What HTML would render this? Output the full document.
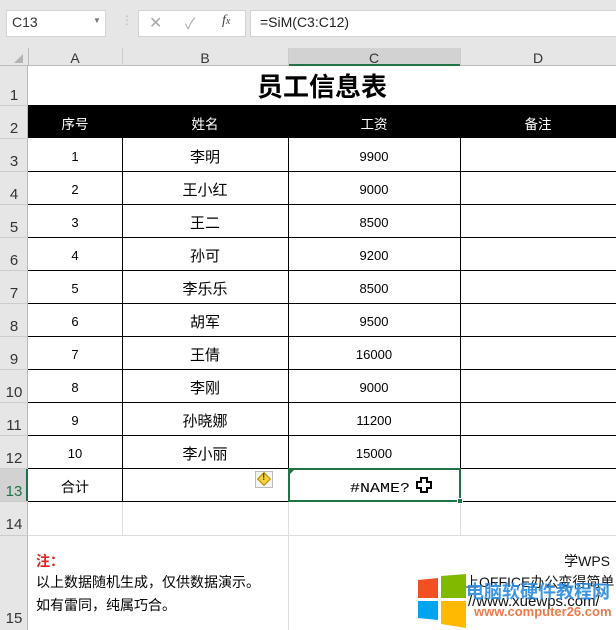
<!DOCTYPE html>
<html><head><meta charset="utf-8"><style>
*{margin:0;padding:0;box-sizing:border-box}
body{width:616px;height:630px;overflow:hidden;background:#e6e6e6;font-family:"Liberation Sans","Noto Sans CJK SC",sans-serif;position:relative}
.a{position:absolute}
.hl{position:absolute;background:#000;height:1px}
.vl{position:absolute;background:#000;width:1px}
.c{position:absolute;text-align:center;font-size:14px;color:#000}
.n{font-size:13px;margin-top:2px}
.rn{position:absolute;left:0;width:28px;text-align:center;font-size:15px;color:#333}
</style></head><body>
<div class="a" style="left:6px;top:10px;width:100px;height:27px;background:#fff;border:1px solid #d4d4d4"></div>
<div class="a" style="left:12px;top:14px;font-size:14px;color:#333">C13</div>
<div class="a" style="left:93px;top:16px;font-size:8px;color:#777">▼</div>
<div class="a" style="left:121px;top:13px;font-size:12px;color:#bbb">⋮</div>
<div class="a" style="left:138px;top:10px;width:108px;height:27px;background:#fff;border:1px solid #d4d4d4"></div>
<div class="a" style="left:149px;top:13px;font-size:16px;color:#aaa">✕</div>
<div class="a" style="left:185px;top:13px;font-size:15px;color:#aaa">✓</div>
<div class="a" style="left:222px;top:13px;font-size:14px;color:#444;font-style:italic;font-family:'Liberation Serif',serif">f<span style="font-size:10px">x</span></div>
<div class="a" style="left:250px;top:10px;width:370px;height:27px;background:#fff;border:1px solid #d4d4d4"></div>
<div class="a" style="left:260px;top:14px;font-size:14px;color:#222">=SiM(C3:C12)</div>
<div class="a" style="left:0;top:48px;width:616px;height:18px;background:#e6e6e6;border-bottom:1px solid #bbb"></div>
<div class="a" style="left:288px;top:48px;width:172px;height:18px;background:#d2d2d2;border-bottom:2px solid #217346"></div>
<div class="a" style="left:14px;top:54px;width:0;height:0;border-left:9px solid transparent;border-bottom:9px solid #b4b4b4"></div>
<div class="vl" style="left:28px;top:48px;height:18px;background:#bbb"></div>
<div class="vl" style="left:122px;top:48px;height:18px;background:#ccc"></div>
<div class="vl" style="left:288px;top:48px;height:18px;background:#ccc"></div>
<div class="vl" style="left:460px;top:48px;height:18px;background:#ccc"></div>
<div class="c" style="left:28px;top:50px;width:94px;color:#333">A</div>
<div class="c" style="left:122px;top:50px;width:166px;color:#333">B</div>
<div class="c" style="left:288px;top:50px;width:172px;color:#333">C</div>
<div class="c" style="left:460px;top:50px;width:156px;color:#333">D</div>
<div class="a" style="left:28px;top:66px;width:588px;height:564px;background:#fff"></div>
<div class="a" style="left:0;top:66px;width:28px;height:564px;background:#e6e6e6;border-right:1px solid #bbb"></div>
<div class="a" style="left:0;top:468px;width:28px;height:33px;background:#d2d2d2;border-right:2px solid #217346"></div>
<div class="a" style="left:0;top:105px;width:28px;height:1px;background:#ccc"></div>
<div class="a" style="left:0;top:138px;width:28px;height:1px;background:#ccc"></div>
<div class="a" style="left:0;top:171px;width:28px;height:1px;background:#ccc"></div>
<div class="a" style="left:0;top:204px;width:28px;height:1px;background:#ccc"></div>
<div class="a" style="left:0;top:237px;width:28px;height:1px;background:#ccc"></div>
<div class="a" style="left:0;top:270px;width:28px;height:1px;background:#ccc"></div>
<div class="a" style="left:0;top:303px;width:28px;height:1px;background:#ccc"></div>
<div class="a" style="left:0;top:336px;width:28px;height:1px;background:#ccc"></div>
<div class="a" style="left:0;top:369px;width:28px;height:1px;background:#ccc"></div>
<div class="a" style="left:0;top:402px;width:28px;height:1px;background:#ccc"></div>
<div class="a" style="left:0;top:435px;width:28px;height:1px;background:#ccc"></div>
<div class="a" style="left:0;top:468px;width:28px;height:1px;background:#ccc"></div>
<div class="a" style="left:0;top:501px;width:28px;height:1px;background:#ccc"></div>
<div class="a" style="left:0;top:535px;width:28px;height:1px;background:#ccc"></div>
<div class="rn" style="top:87px">1</div>
<div class="rn" style="top:120px">2</div>
<div class="rn" style="top:153px">3</div>
<div class="rn" style="top:186px">4</div>
<div class="rn" style="top:219px">5</div>
<div class="rn" style="top:252px">6</div>
<div class="rn" style="top:285px">7</div>
<div class="rn" style="top:318px">8</div>
<div class="rn" style="top:351px">9</div>
<div class="rn" style="top:384px">10</div>
<div class="rn" style="top:417px">11</div>
<div class="rn" style="top:450px">12</div>
<div class="rn" style="top:483px;color:#217346">13</div>
<div class="rn" style="top:516px">14</div>
<div class="rn" style="top:610px">15</div>
<div class="c" style="left:28px;top:70px;width:588px;font-size:26px;font-weight:bold;line-height:34px">员工信息表</div>
<div class="a" style="left:28px;top:105px;width:588px;height:33px;background:#000"></div>
<div class="c" style="left:28px;top:113px;width:94px;color:#fff;font-size:13.5px">序号</div>
<div class="c" style="left:122px;top:113px;width:166px;color:#fff;font-size:13.5px">姓名</div>
<div class="c" style="left:288px;top:113px;width:172px;color:#fff;font-size:13.5px">工资</div>
<div class="c" style="left:460px;top:113px;width:156px;color:#fff;font-size:13.5px">备注</div>
<div class="vl" style="left:122px;top:138px;height:363px"></div>
<div class="vl" style="left:288px;top:138px;height:363px"></div>
<div class="vl" style="left:460px;top:138px;height:363px"></div>
<div class="hl" style="left:28px;top:171px;width:588px"></div>
<div class="hl" style="left:28px;top:204px;width:588px"></div>
<div class="hl" style="left:28px;top:237px;width:588px"></div>
<div class="hl" style="left:28px;top:270px;width:588px"></div>
<div class="hl" style="left:28px;top:303px;width:588px"></div>
<div class="hl" style="left:28px;top:336px;width:588px"></div>
<div class="hl" style="left:28px;top:369px;width:588px"></div>
<div class="hl" style="left:28px;top:402px;width:588px"></div>
<div class="hl" style="left:28px;top:435px;width:588px"></div>
<div class="hl" style="left:28px;top:468px;width:588px"></div>
<div class="hl" style="left:28px;top:501px;width:588px"></div>
<div class="a" style="left:122px;top:502px;width:1px;height:33px;background:#ddd"></div>
<div class="a" style="left:288px;top:502px;width:1px;height:128px;background:#ddd"></div>
<div class="a" style="left:460px;top:502px;width:1px;height:33px;background:#ddd"></div>
<div class="a" style="left:28px;top:535px;width:588px;height:1px;background:#ddd"></div>
<div class="c n" style="left:28px;top:147px;width:94px">1</div><div class="c" style="left:122px;top:146px;width:166px;font-size:15px">李明</div><div class="c n" style="left:288px;top:147px;width:172px">9900</div>
<div class="c n" style="left:28px;top:180px;width:94px">2</div><div class="c" style="left:122px;top:179px;width:166px;font-size:15px">王小红</div><div class="c n" style="left:288px;top:180px;width:172px">9000</div>
<div class="c n" style="left:28px;top:213px;width:94px">3</div><div class="c" style="left:122px;top:212px;width:166px;font-size:15px">王二</div><div class="c n" style="left:288px;top:213px;width:172px">8500</div>
<div class="c n" style="left:28px;top:246px;width:94px">4</div><div class="c" style="left:122px;top:245px;width:166px;font-size:15px">孙可</div><div class="c n" style="left:288px;top:246px;width:172px">9200</div>
<div class="c n" style="left:28px;top:279px;width:94px">5</div><div class="c" style="left:122px;top:278px;width:166px;font-size:15px">李乐乐</div><div class="c n" style="left:288px;top:279px;width:172px">8500</div>
<div class="c n" style="left:28px;top:312px;width:94px">6</div><div class="c" style="left:122px;top:311px;width:166px;font-size:15px">胡军</div><div class="c n" style="left:288px;top:312px;width:172px">9500</div>
<div class="c n" style="left:28px;top:345px;width:94px">7</div><div class="c" style="left:122px;top:344px;width:166px;font-size:15px">王倩</div><div class="c n" style="left:288px;top:345px;width:172px">16000</div>
<div class="c n" style="left:28px;top:378px;width:94px">8</div><div class="c" style="left:122px;top:377px;width:166px;font-size:15px">李刚</div><div class="c n" style="left:288px;top:378px;width:172px">9000</div>
<div class="c n" style="left:28px;top:411px;width:94px">9</div><div class="c" style="left:122px;top:410px;width:166px;font-size:15px">孙晓娜</div><div class="c n" style="left:288px;top:411px;width:172px">11200</div>
<div class="c n" style="left:28px;top:444px;width:94px">10</div><div class="c" style="left:122px;top:443px;width:166px;font-size:15px">李小丽</div><div class="c n" style="left:288px;top:444px;width:172px">15000</div>
<div class="c" style="left:28px;top:477px;width:94px;font-size:14px">合计</div>
<div class="a" style="left:255px;top:471px;width:18px;height:17px;border:1px solid #bbb;background:#f4f4f4"></div>
<div class="a" style="left:259px;top:474px;width:10px;height:10px;background:#f5d33a;border:1px solid #b08a00;transform:rotate(45deg)"></div>
<div class="a" style="left:262px;top:472px;font-size:10px;font-weight:bold;color:#5a4300">!</div>
<div class="a" style="left:288px;top:468px;width:173px;height:34px;border:2px solid #217346"></div>
<div class="a" style="left:457px;top:498px;width:6px;height:6px;background:#217346;border:1px solid #fff"></div>
<div class="a" style="left:290px;top:470px;width:0;height:0;border-top:4px solid #217346;border-right:4px solid transparent"></div>
<svg class="a" style="left:340px;top:475px" width="120" height="24"><text x="10" y="17" font-family="Liberation Mono,monospace" font-size="14" textLength="60" lengthAdjust="spacingAndGlyphs">#NAME?</text><path d="M77 7h4v-4h6v4h4v6h-4v4h-6v-4h-4z" fill="#fff" stroke="#000" stroke-width="2"/></svg>
<div class="a" style="left:36px;top:551px;font-size:14px;color:#e02020;font-weight:bold">注：</div>
<div class="a" style="left:36px;top:572px;font-size:14px;color:#000">以上数据随机生成，仅供数据演示。</div>
<div class="a" style="left:36px;top:595px;font-size:14px;color:#000">如有雷同，纯属巧合。</div>
<div class="a" style="right:6px;top:551px;font-size:14px;color:#111">学WPS</div>
<div class="a" style="left:465px;top:572px;font-size:14px;color:#111;white-space:nowrap">上OFFICE办公变得简单</div>
<div class="a" style="left:468px;top:593px;font-size:15px;color:#111;white-space:nowrap">//www.xuewps.com/</div>
<svg class="a" style="left:416px;top:574px" width="60" height="56"><polygon points="2,6 22,4 22,24 2,24" fill="#f25022"/><polygon points="25,2 50,0 50,24 25,24" fill="#7fba00"/><polygon points="2,27 22,27 22,46 2,44" fill="#00a4ef"/><polygon points="25,27 50,27 50,54 25,50" fill="#ffb900"/></svg>
<div class="a" style="left:466px;top:578px;font-size:18px;color:#2a8be0;font-weight:bold;white-space:nowrap;opacity:.9">电脑软硬件教程网</div>
<div class="a" style="left:474px;top:604px;font-size:13px;color:#e8632b;font-weight:bold;opacity:.85">www.computer26.com</div>
</body></html>
